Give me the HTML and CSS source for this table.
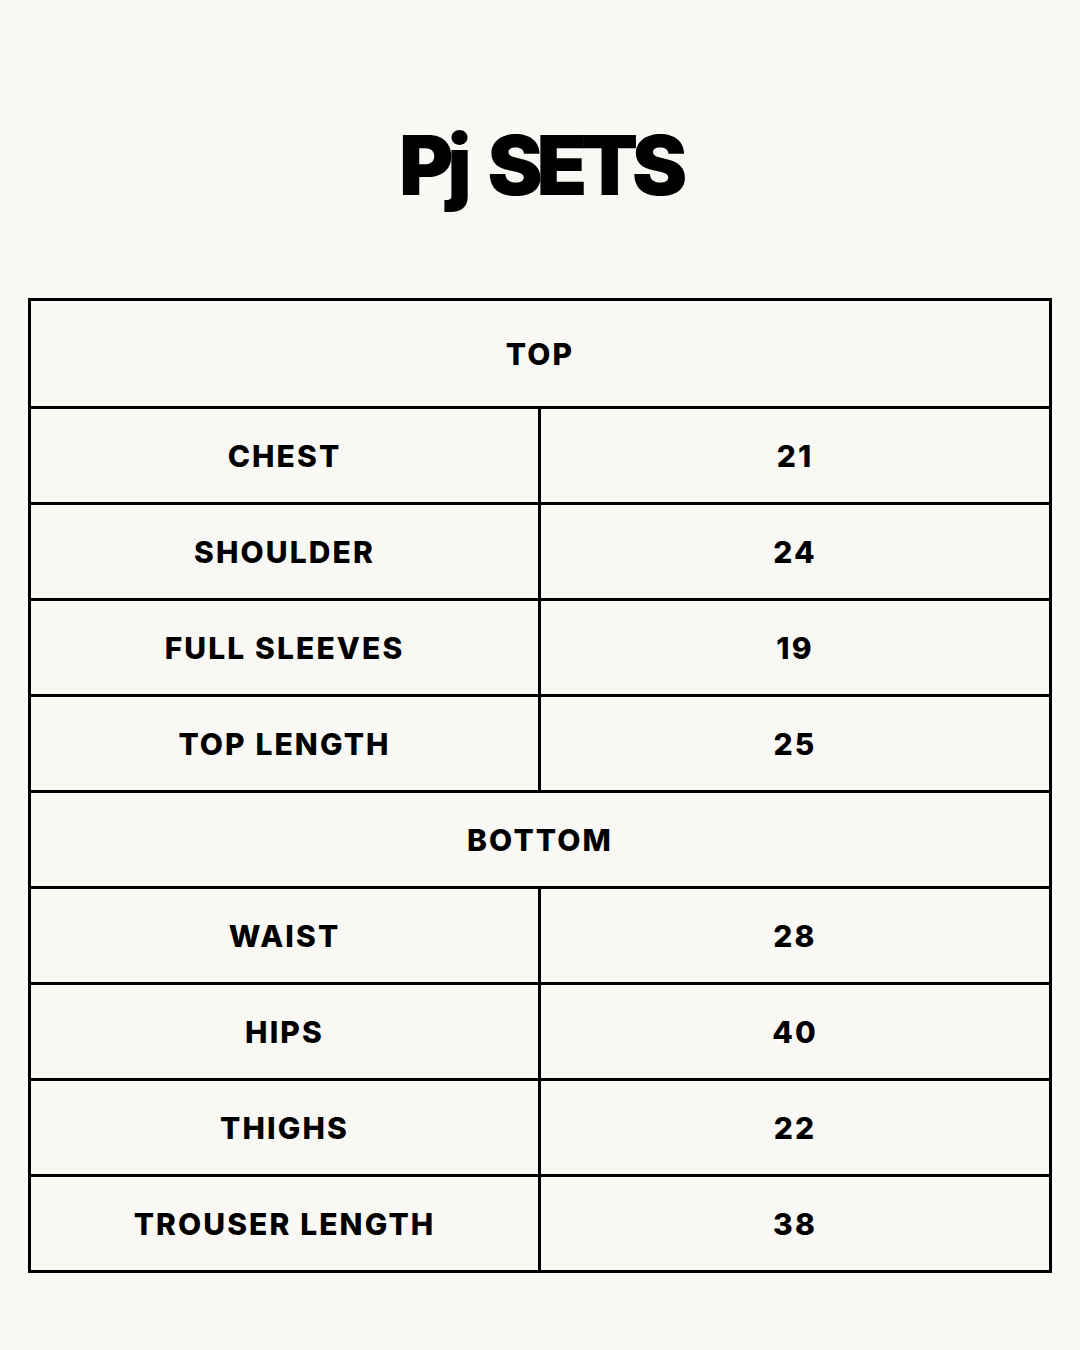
FILE: index.html
```html
<!DOCTYPE html>
<html lang="en">
<head>
<meta charset="utf-8">
<title>Pj Sets</title>
<link rel="stylesheet" href="styles.css">
</head>
<body>
<main class="page">
  <h1 class="title">Pj SETS</h1>
  <div class="sizes">
    <div class="cell wide head">TOP</div>
    <div class="cell">CHEST</div><div class="cell">21</div>
    <div class="cell">SHOULDER</div><div class="cell">24</div>
    <div class="cell">FULL SLEEVES</div><div class="cell">19</div>
    <div class="cell">TOP LENGTH</div><div class="cell">25</div>
    <div class="cell wide">BOTTOM</div>
    <div class="cell">WAIST</div><div class="cell">28</div>
    <div class="cell">HIPS</div><div class="cell">40</div>
    <div class="cell">THIGHS</div><div class="cell">22</div>
    <div class="cell">TROUSER LENGTH</div><div class="cell">38</div>
  </div>
</main>
</body>
</html>
```
FILE: styles.css
```css
html, body {
  margin: 0;
  padding: 0;
  background: #f9f8f4;
}
.page {
  width: 1080px;
  height: 1350px;
  box-sizing: border-box;
  padding: 112px 28px 0 28px;
  display: flex;
  flex-direction: column;
}
.title {
  margin: 0;
  height: 186px;
  font-family: Inter, sans-serif;
  font-weight: 900;
  font-size: 83px;
  line-height: 107px;
  letter-spacing: -0.075em;
  word-spacing: 0.14em;
  text-align: center;
  color: #000;
  padding-left: 0;
}
.sizes {
  display: grid;
  grid-template-columns: 510px 511px;
  grid-template-rows: 108px;
  grid-auto-rows: 96px;
  width: 1024px;
  box-sizing: border-box;
  border-top: 3px solid #000;
  border-left: 3px solid #000;
  font-family: Inter, sans-serif;
  color: #000;
}
.cell {
  display: flex;
  align-items: center;
  justify-content: center;
  border-right: 3px solid #000;
  border-bottom: 3px solid #000;
  font-size: 30px;
  font-weight: 800;
  letter-spacing: 0.07em;
  padding-top: 1px;
}
.wide {
  grid-column: 1 / -1;
}
```
